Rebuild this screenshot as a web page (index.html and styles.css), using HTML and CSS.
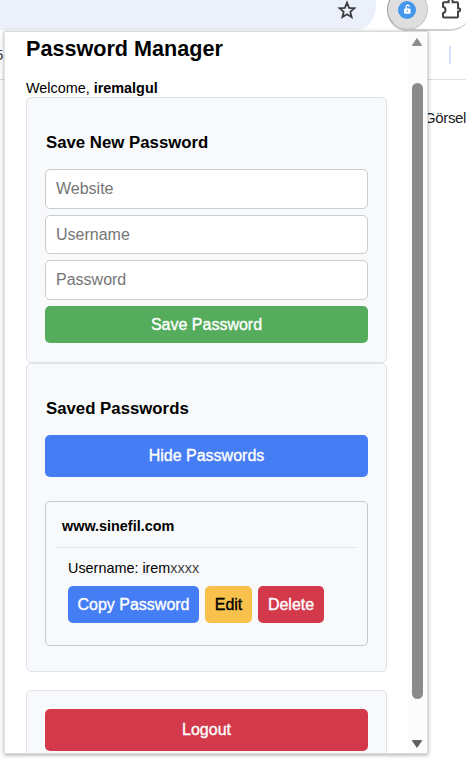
FILE: index.html
```html
<!DOCTYPE html>
<html lang="en">
<head>
<meta charset="utf-8">
<title>Password Manager</title>
<link rel="stylesheet" href="styles.css">
</head>
<body>
<div class="browser">
  <header class="toolbar">
    <div class="address">
      <svg class="star" viewBox="0 0 20 20" width="20" height="20"><path d="M10 2.6 12.1 7.9 17.4 8.3 13.3 11.8 14.6 17.1 10 14.2 5.4 17.1 6.7 11.8 2.6 8.3 7.9 7.9Z"/></svg>
    </div>
    <div class="actions">
      <span class="ext">
        <svg viewBox="0 0 18 18" width="18" height="18"><circle cx="9" cy="9" r="9" fill="#4597ee"/><rect x="6" y="7.4" width="6.6" height="5.4" rx="1.2" fill="#fff"/><path d="M8.2 8V6.2a1.6 1.6 0 0 1 3.2-.6" fill="none" stroke="#fff" stroke-width="1.4"/><circle cx="9.3" cy="10.1" r=".8" fill="#4597ee"/></svg>
      </span>
      <svg class="puzzle" viewBox="0 0 22 22" width="22" height="22"><path d="M3 2.2H7.6V1a2 2 0 0 1 4 0V2.2H16a1 1 0 0 1 1 1V8.2h.6a1.6 1.6 0 0 1 0 3.2H17v5a1 1 0 0 1-1 1H3a1 1 0 0 1-1-1V13.2a3.3 3.3 0 0 0 0-6.4V3.2a1 1 0 0 1 1-1Z"/></svg>
    </div>
  </header>
  <div class="bookmarks"><span>5</span><i></i></div>
  <div class="page">Görsel</div>
</div>
<div class="popup">
  <main class="content">
    <h1>Password Manager</h1>
    <p class="welcome">Welcome, <b>iremalgul</b></p>
    <section class="card save">
      <h2>Save New Password</h2>
      <input type="text" placeholder="Website">
      <input type="text" placeholder="Username">
      <input type="password" placeholder="Password">
      <button class="btn green">Save Password</button>
    </section>
    <section class="card saved">
      <h2>Saved Passwords</h2>
      <button class="btn blue tall">Hide Passwords</button>
      <div class="site">
        <h3>www.sinefil.com</h3>
        <div class="entry">
          <p>Username: irem<span>xxxx</span></p>
          <div class="row">
            <button class="btn blue copy">Copy Password</button>
            <button class="btn yellow edit">Edit</button>
            <button class="btn red delete">Delete</button>
          </div>
        </div>
      </div>
    </section>
    <section class="card logout">
      <button class="btn red tall">Logout</button>
    </section>
  </main>
  <div class="scrollbar">
    <svg viewBox="0 0 12 10" width="12" height="10"><path d="M6 1.6 10.6 8.4H1.4Z" fill="#8b8b8b" stroke="#8b8b8b" stroke-linejoin="round"/></svg>
    <div class="thumb"></div>
    <svg viewBox="0 0 12 10" width="12" height="10"><path d="M6 8.4 10.6 1.6H1.4Z" fill="#606060" stroke="#606060" stroke-linejoin="round"/></svg>
  </div>
</div>
</body>
</html>
```
FILE: styles.css
```css
* { box-sizing: border-box; }
body {
  margin: 0;
  width: 466px;
  height: 764px;
  overflow: hidden;
  position: relative;
  background: #fff;
  color: #000;
  font-family: "Liberation Sans", Arial, sans-serif;
}
h1, h2, h3, p { margin: 0; white-space: nowrap; }
.toolbar { display: flex; height: 30px; }
.address {
  flex: none;
  width: 376px;
  height: 30px;
  padding-left: 337px;
  background: #ebf0fa;
  border-bottom-right-radius: 20px 24px;
}
.star { display: block; fill: none; stroke: #3c4043; stroke-width: 1.8; }
.actions {
  display: flex;
  flex: none;
  width: 85px;
  height: 31px;
  margin-left: 11px;
  border-bottom: 2px solid #cfcfcf;
  border-radius: 0 0 22px 20px;
}
.ext {
  flex: none;
  width: 41px;
  height: 41px;
  margin-top: -11px;
  padding: 11px 10px;
  border: 1px solid #c4c4c4;
  border-left-color: #9c9c9c;
  border-radius: 50%;
  background: #dedede;
}
.ext svg { display: block; }
.puzzle { flex: none; margin: 0 0 0 13px; fill: none; stroke: #414447; stroke-width: 2; }
.bookmarks {
  display: flex;
  justify-content: space-between;
  height: 50px;
  padding: 16px 15px 0 0;
  border-bottom: 1px solid #dcdfe3;
  font-size: 15px;
  color: #444;
}
.bookmarks span { margin-left: -5px; }
.bookmarks i { width: 2px; height: 18px; background: #d3e2fb; }
.page { padding: 28px 0 0 424px; font-size: 15px; letter-spacing: -.35px; line-height: 20px; color: #202124; white-space: nowrap; }
.popup {
  position: absolute;
  left: 4px;
  top: 31px;
  display: flex;
  width: 424px;
  height: 723px;
  overflow: hidden;
  border: 1px solid #dadbdc;
  border-left-color: #e4e4e4;
  background: #fff;
  box-shadow: 0 1px 4px rgba(0, 0, 0, .35);
}
.content { flex: none; width: 382px; padding: 4px 0 0 21px; }
h1 { font-size: 21.6px; line-height: 26px; }
.welcome { margin-top: 18px; font-size: 14.4px; line-height: 16px; height: 17px; }
.card {
  width: 361px;
  padding: 0 18px;
  border: 1px solid #dfe3e8;
  border-radius: 5px;
  background: #f8f9fb;
}
.save { height: 266px; padding-top: 35px; }
h2 { margin: 0 0 16px 1px; font-size: 16.8px; line-height: 20px; }
input {
  display: block;
  width: 323px;
  height: 39.6px;
  margin: 0 0 6px;
  padding: 1px 10px 0;
  border: 1px solid #cbcccd;
  border-radius: 5px;
  background: #fff;
  font: 16px "Liberation Sans", Arial, sans-serif;
}
input::placeholder { color: #757575; }
.btn {
  display: block;
  width: 323px;
  height: 37.4px;
  margin: 0;
  padding: 1px 0 0;
  border: 0;
  border-radius: 5px;
  color: #fff;
  font: 16px "Liberation Sans", Arial, sans-serif;
  -webkit-text-stroke: .35px currentColor;
  white-space: nowrap;
}
.tall { height: 42px; padding: 0; }
.green { background: #54ac5c; }
.blue { background: #457df4; }
.yellow { background: #f8c14c; color: #000; }
.red { background: #d3394b; }
.saved { height: 308.5px; padding-top: 35px; }
.site {
  width: 323px;
  height: 145px;
  margin-top: 24px;
  padding: 12px 10px 0;
  border: 1px solid #c7c9cb;
  border-radius: 5px;
}
h3 { height: 34px; padding-left: 6px; border-bottom: 1px solid #e1e3e6; font-size: 14.4px; line-height: 24px; }
.entry { padding: 11px 0 0 12px; }
.entry p { font-size: 14.4px; line-height: 18px; }
.entry span { color: #444; }
.row { display: flex; gap: 6px; margin-top: 9px; }
.copy { width: 131px; }
.edit { width: 47px; }
.delete { width: 66px; }
.logout { height: 80px; margin-top: 18px; padding-top: 18.5px; }
.scrollbar {
  display: flex;
  flex-direction: column;
  align-items: center;
  justify-content: space-between;
  width: 18px;
  margin-left: 21px;
  padding: 5px 0 4px;
  background: #fcfcfc;
}
.thumb { width: 11px; height: 616px; margin-bottom: 4px; border-radius: 6px; background: #8b8b8b; }
```
